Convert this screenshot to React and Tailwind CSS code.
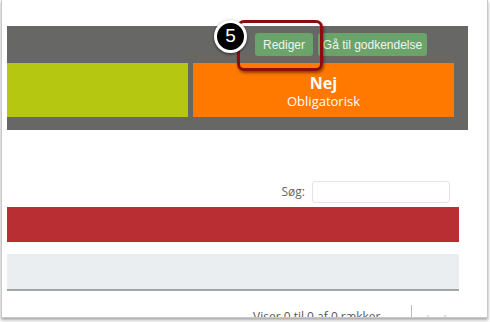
export default function App() {
  const sans = { fontFamily: '"Open Sans", "Noto Sans", sans-serif' };
  const arial = { fontFamily: '"Liberation Sans", Arial, sans-serif' };

  return (
    <div className="relative w-[490px] h-[322px] bg-white overflow-hidden">
      {/* Cadre de la capture */}
      <div className="ml-[1px] w-[487px] h-[318px] bg-white border-x border-b border-[#c9c9c9] shadow-[0_2px_3px_rgba(0,0,0,0.35)] overflow-hidden pl-[5px] pt-[26px]">
        {/* Bandeau gris */}
        <div className="w-[461px] h-[104px] bg-[#676765] pt-[7px]">
          <div className="flex justify-end gap-[5px] pr-[41px]" style={arial}>
            <button className="h-[23px] w-[58px] rounded-[3px] bg-[#6ba46b] text-[12px] text-[#f2f2f2]">
              Rediger
            </button>
            <button className="h-[23px] w-[109px] rounded-[3px] bg-[#6ba46b] text-[12px] text-[#f2f2f2]">
              Gå til godkendelse
            </button>
          </div>
          <div className="flex gap-[5px] mt-[7px]">
            <div className="w-[181px] h-[54px] bg-[#b5c711]" />
            <div className="w-[261px] h-[54px] bg-[#ff7800] flex flex-col items-center justify-center pt-[2px] text-white" style={sans}>
              <span className="text-[16px] font-bold leading-[20px]">Nej</span>
              <span className="text-[13px] leading-[17px]">Obligatorisk</span>
            </div>
          </div>
        </div>

        {/* Recherche */}
        <div className="flex justify-end items-center gap-[7px] w-[443px] mt-[51px]" style={sans}>
          <span className="text-[12px] text-[#666]">Søg:</span>
          <input className="w-[138px] h-[22px] border border-[#e1e4e8] rounded-[3px] bg-white" />
        </div>

        {/* Tableau */}
        <div className="w-[452px] h-[35px] bg-[#b92e32] mt-[4px]" />
        <div className="w-[452px] h-[37px] bg-[#ebeef1] mt-[12px] border-b-2 border-[#a3a5a7]" />

        {/* Pied de tableau, coupé par le bord de la capture */}
        <div className="flex items-start w-[452px] mt-[19px] text-[12px] text-[#555] leading-[14px]" style={sans}>
          <span className="ml-[246px]">Viser 0 til 0 af 0 rækker</span>
          <span className="ml-auto mr-[14px] mt-[-5px] w-[1px] h-[12px] bg-[#bbb]" />
          <span className="text-[#bbb] mr-[14px]">‹</span>
          <span className="text-[#bbb] mr-[12px]">›</span>
        </div>
      </div>

      {/* Annotation : cadre rouge */}
      <div className="absolute left-[237px] top-[20px] w-[86px] h-[51px] border-[3px] border-[#8e0b0d] rounded-[7px] shadow-[1px_2px_3px_rgba(0,0,0,0.45)]" />

      {/* Annotation : pastille numéro */}
      <div
        className="absolute left-[214px] top-[20px] w-[33px] h-[33px] rounded-full bg-black border-[3px] border-white shadow-[0_1px_3px_rgba(0,0,0,0.6)] flex items-center justify-center text-white text-[19px]"
        style={arial}
      >
        5
      </div>
    </div>
  );
}
